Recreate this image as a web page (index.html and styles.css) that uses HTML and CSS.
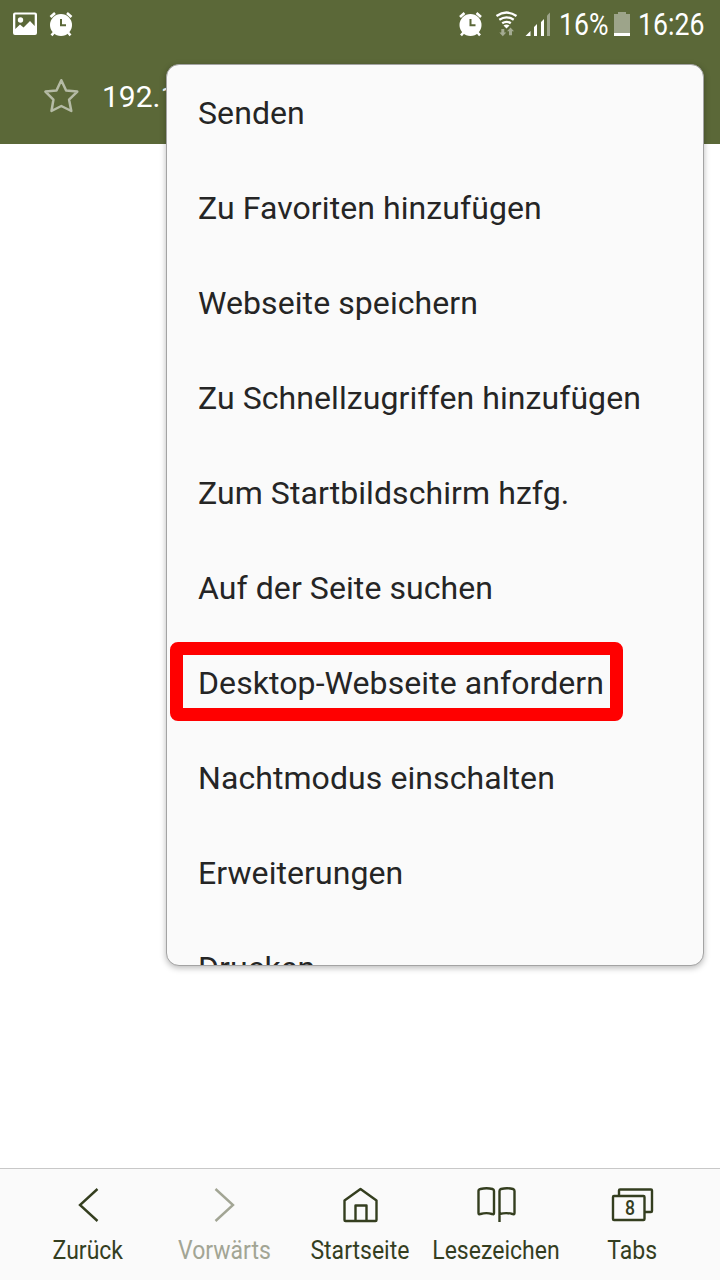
FILE: index.html
```html
<!DOCTYPE html>
<html lang="de">
<head>
<meta charset="utf-8">
<title>Browser</title>
<link rel="stylesheet" href="styles.css">
</head>
<body>
<div class="screen">
  <header class="top">
    <div class="status">
      <svg class="status-left" width="80" height="48" viewBox="0 0 80 48">
        <path fill="#fff" fill-rule="evenodd" d="M15 12.500h20a2 2 0 0 1 2 2v18.500a2 2 0 0 1-2 2H15a2 2 0 0 1-2-2V14.500a2 2 0 0 1 2-2zM15.300 14.500v14.500l4.700-4.500 3.500 3 6.500-6.500 4.700 5V14.500z"/>
        <circle cx="20.500" cy="20" r="2.700" fill="#fff"/>
        <g id="alarm"><circle cx="61" cy="25" r="11" fill="#fff"/><path d="M50.500 17l4.500-4M71.500 17l-4.500-4M54 32.500l-2.500 2.800M68 32.500l2.500 2.800" stroke="#fff" stroke-width="2.600" fill="none"/><path d="M61 19v6.200h5" stroke="#5b6838" stroke-width="2" fill="none"/></g>
      </svg>
      <svg class="status-right" width="100" height="48" viewBox="455 0 100 48">
        <use href="#alarm" x="409.500"/>
        <g fill="none" stroke="#fff" stroke-width="2.300"><path d="M496.500 16q10-7 20 0M499.300 19.800q7.200-5 14.400 0M502.200 23.300q4.300-3 8.600 0"/></g>
        <path d="M503.500 25.500q3-2 6 0l-3 3z" fill="#fff"/>
        <path d="M501.300 29h3v3.500h2l-3.500 3.800-3.500-3.800h2zM509 35.300h3v-4h2l-3.500-3.800-3.500 3.800h2z" fill="#a4ab92"/>
        <path d="M525.500 36l5-5v5zM534 36V27l3-3v12zM541 36V22l3-3v17z" fill="#fff"/><path d="M547 36V15.500l3-3V36z" fill="#9da48a"/>
      </svg>
      <span class="status-text percent">16%</span>
      <svg class="battery" width="16" height="24" viewBox="0 0 16 24"><path d="M4 0h8v2h4v19H0V2h4z" fill="#9da48a"/><path d="M0 21h16v3H0z" fill="#fff"/></svg>
      <span class="status-text clock">16:26</span>
    </div>
    <div class="address">
      <svg class="star" width="36" height="36" viewBox="0 0 36 36"><path d="M18.300 2.200l4.800 10.300 11.200 1.100-8.200 8.100 2.200 11.300-10-5-9.800 5 1.900-11.300-8-8.100 11.100-1.100z" fill="none" stroke="#b5bba5" stroke-width="2.500" stroke-linejoin="round"/></svg>
      <span>192.1</span>
    </div>
  </header>
  <main class="page"></main>
  <nav class="toolbar">
    <div class="tool"><svg width="44" height="40" viewBox="0 0 44 40"><path d="M31.500 6L14 22l17.500 16"/></svg><span>Zurück</span></div>
    <div class="tool disabled"><svg width="44" height="40" viewBox="0 0 44 40"><path d="M13.500 6L31 22l-17.500 16"/></svg><span>Vorwärts</span></div>
    <div class="tool"><svg width="44" height="40" viewBox="0 0 44 40"><path d="M6.500 17.500L22.500 6 38.500 17.500v19.500q0 1-1 1h-30q-1 0-1-1zM17.500 37.500V22.500h11v15" stroke-linejoin="round"/></svg><span>Startseite</span></div>
    <div class="tool"><svg width="44" height="40" viewBox="0 0 44 40"><path d="M4.500 8q0-1.500 2-2 6-1.600 12 0 1.500.5 1.500 2v22q0 1.800-2 1-5.500-1.800-11.500 0-2 .8-2-1zM25.500 39V8q0-1.500 1.500-2 6-1.600 12 0 1.500.5 1.500 2v22q0 1.800-2 1-6-1.800-13 0" stroke-linejoin="round"/></svg><span>Lesezeichen</span></div>
    <div class="tool"><svg width="44" height="40" viewBox="0 0 44 40"><path d="M4 13h29.500q1 0 1 1v22q0 1-1 1H4q-1 0-1-1V14q0-1 1-1zM9 12.500V7.500q0-1 1-1h31q1 0 1 1V28q0 1-1 1h-6"/><text class="tab-count" transform="translate(20 32) scale(.88 1)" text-anchor="middle">8</text></svg><span>Tabs</span></div>
  </nav>
  <ul class="menu">
    <li>Senden</li>
    <li>Zu Favoriten hinzufügen</li>
    <li>Webseite speichern</li>
    <li>Zu Schnellzugriffen hinzufügen</li>
    <li>Zum Startbildschirm hzfg.</li>
    <li>Auf der Seite suchen</li>
    <li class="marked">Desktop-Webseite anfordern</li>
    <li>Nachtmodus einschalten</li>
    <li>Erweiterungen</li>
    <li>Drucken</li>
  </ul>
</div>
</body>
</html>
```
FILE: styles.css
```css
* { box-sizing: border-box; }
body { margin: 0; font-family: Roboto, sans-serif; }
svg { display: block; flex: none; }
.screen { position: relative; width: 720px; height: 1280px; display: flex; flex-direction: column; overflow: hidden; background: #fff; }
.top { height: 144px; background: #5b6838; color: #fff; }
.status { height: 48px; display: flex; align-items: center; }
.status-right { margin-left: 375px; }
.status-text { font-size: 31px; line-height: 48px; white-space: nowrap; transform: scaleX(.86); transform-origin: left; padding-top: 2px; }
.percent { width: 54px; margin-left: 4px; }
.battery { margin-left: 1px; }
.clock { margin-left: 8px; }
.address { height: 96px; padding-left: 43px; display: flex; align-items: center; font-size: 30px; }
.star { margin-right: 23px; }
.page { flex: 1; }
.toolbar { height: 112px; padding: 0 20px; display: flex; background: #fafafa; border-top: 1px solid #c8c8c8; color: #343e1f; }
.tool { width: 136px; padding-top: 14px; display: flex; flex-direction: column; align-items: center; }
.tool svg { fill: none; stroke: currentColor; stroke-width: 2.4; }
.tool span { margin-top: 11px; font-size: 26px; line-height: 32px; white-space: nowrap; transform: scaleX(.885); }
.tool .tab-count { font-size: 20px; font-weight: 500; fill: currentColor; stroke: none; }
.disabled { color: #a2a594; }
.menu { position: absolute; left: 166px; top: 64px; width: 538px; height: 902px; margin: 0; padding: 0; list-style: none; overflow: hidden; background: #fafafa; border: 1px solid #a3a3a3; border-radius: 13px; box-shadow: 0 2px 6px rgba(0,0,0,.28); color: #252525; }
.menu li { position: relative; height: 95px; padding-left: 31px; font-size: 32px; line-height: 96px; letter-spacing: .08px; white-space: nowrap; }
.marked::before { content: ""; box-sizing: border-box; position: absolute; left: 3px; top: 7px; width: 453px; height: 79px; border: 13px solid #f00; border-radius: 8px; }
```
